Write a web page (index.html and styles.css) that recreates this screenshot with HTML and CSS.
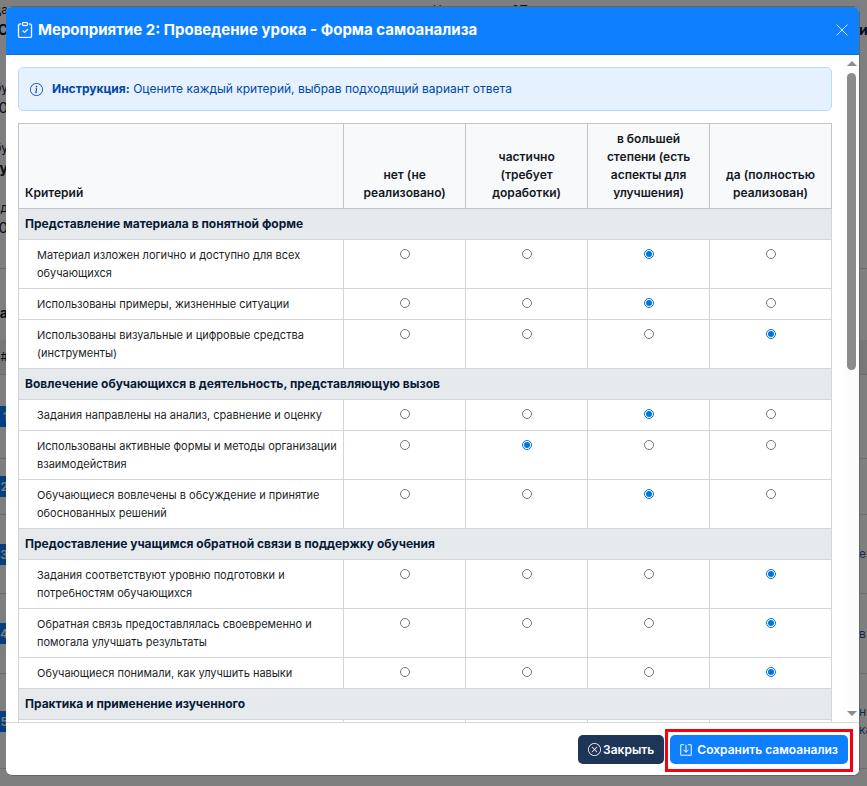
FILE: index.html
```
<!DOCTYPE html>
<html lang="ru">
<head>
  <meta charset="UTF-8">
  <meta name="viewport" content="width=device-width, initial-scale=1.0">
  <title>Мероприятие 2: Проведение урока - Форма самоанализа</title>
  <link rel="stylesheet" href="styles.css">
</head>
<body>

<!-- Page under the modal -->
<div class="page" aria-hidden="true">
  <div class="page-row h-20"><span>да</span><div class="page-mid"><span>Н</span><span>ЗП</span></div><span></span></div>
  <div class="page-row h-20 strong"><span>СС</span><span>и</span></div>
  <div class="page-row h-38"></div>
  <div class="page-row h-20"><span>бу</span></div>
  <div class="page-row h-20 big"><span>0</span></div>
  <div class="page-row h-20"></div>
  <div class="page-row h-20"><span>бу</span></div>
  <div class="page-row h-20 strong"><span>у</span></div>
  <div class="page-row h-20"></div>
  <div class="page-row h-20"><span>зд</span></div>
  <div class="page-row h-20 big"><span>0</span></div>
  <div class="page-row h-31 line"></div>
  <div class="page-row h-71 strong"><span class="low">а</span></div>
  <div class="page-row h-35 line shade"><span>#</span></div>
  <div class="page-row h-84 line"><span class="badge">1</span></div>
  <div class="page-row h-56 line"><span class="badge">2</span></div>
  <div class="page-row h-79 line"><span class="badge">3</span><span class="link">ен</span></div>
  <div class="page-row h-80 line"><span class="badge">4</span><span class="link">в</span></div>
  <div class="page-row h-95 line"><span class="badge">5</span><span class="link">ни<br>ка</span></div>
</div>

<div class="backdrop">
  <div class="modal" role="dialog" aria-labelledby="modalTitle">
    <div class="modal-header">
      <svg class="icon" viewBox="0 0 16 16" fill="currentColor" stroke="currentColor" stroke-width=".3">
        <path fill-rule="evenodd" d="M10.854 7.146a.5.5 0 0 1 0 .708l-3 3a.5.5 0 0 1-.708 0l-1.500-1.500a.5.5 0 1 1 .708-.708L7.500 9.793l2.646-2.647a.5.5 0 0 1 .708 0z"/>
        <path d="M4 1.500H3a2 2 0 0 0-2 2V14a2 2 0 0 0 2 2h10a2 2 0 0 0 2-2V3.500a2 2 0 0 0-2-2h-1v1h1a1 1 0 0 1 1 1V14a1 1 0 0 1-1 1H3a1 1 0 0 1-1-1V3.500a1 1 0 0 1 1-1h1z"/>
        <path d="M9.500 1a.5.5 0 0 1 .5.5v1a.5.5 0 0 1-.5.5h-3a.5.5 0 0 1-.5-.5v-1a.5.5 0 0 1 .5-.5zm-3-1A1.500 1.500 0 0 0 5 1.500v1A1.500 1.500 0 0 0 6.500 4h3A1.500 1.500 0 0 0 11 2.500v-1A1.500 1.500 0 0 0 9.500 0z"/>
      </svg>
      <h1 id="modalTitle">Мероприятие 2: Проведение урока - Форма самоанализа</h1>
      <button type="button" class="close" aria-label="Закрыть">
        <svg viewBox="0 0 12 12" fill="none" stroke="currentColor"><path d="M.5.5l11 11M11.500.5l-11 11"/></svg>
      </button>
    </div>

    <div class="modal-body">
      <div class="content">
        <div class="alert">
          <svg class="icon" viewBox="0 0 16 16" fill="currentColor">
            <path d="M8 15A7 7 0 1 1 8 1a7 7 0 0 1 0 14m0 1A8 8 0 1 0 8 0a8 8 0 0 0 0 16"/>
            <path d="m8.930 6.588-2.290.287-.082.380.450.083c.294.070.352.176.288.469l-.738 3.468c-.194.897.105 1.319.808 1.319.545 0 1.178-.252 1.465-.598l.088-.416c-.2.176-.492.246-.686.246-.275 0-.375-.193-.304-.533zM9 4.500a1 1 0 1 1-2 0 1 1 0 0 1 2 0"/>
          </svg>
          <p><strong>Инструкция:</strong> Оцените каждый критерий, выбрав подходящий вариант ответа</p>
        </div>

        <table class="criteria">
          <thead>
            <tr>
              <th class="name">Критерий</th>
              <th>нет (не реализовано)</th>
              <th>частично (требует доработки)</th>
              <th>в большей степени (есть аспекты для улучшения)</th>
              <th>да (полностью реализован)</th>
            </tr>
          </thead>
          <tbody>
            <tr class="section"><td colspan="5">Представление материала в понятной форме</td></tr>
            <tr>
              <td id="c1">Материал изложен логично и доступно для всех обучающихся</td>
              <td><input type="radio" name="c1" aria-labelledby="c1"></td>
              <td><input type="radio" name="c1" aria-labelledby="c1"></td>
              <td><input type="radio" name="c1" aria-labelledby="c1" checked></td>
              <td><input type="radio" name="c1" aria-labelledby="c1"></td>
            </tr>
            <tr>
              <td id="c2">Использованы примеры, жизненные ситуации</td>
              <td><input type="radio" name="c2" aria-labelledby="c2"></td>
              <td><input type="radio" name="c2" aria-labelledby="c2"></td>
              <td><input type="radio" name="c2" aria-labelledby="c2" checked></td>
              <td><input type="radio" name="c2" aria-labelledby="c2"></td>
            </tr>
            <tr>
              <td id="c3">Использованы визуальные и цифровые средства (инструменты)</td>
              <td><input type="radio" name="c3" aria-labelledby="c3"></td>
              <td><input type="radio" name="c3" aria-labelledby="c3"></td>
              <td><input type="radio" name="c3" aria-labelledby="c3"></td>
              <td><input type="radio" name="c3" aria-labelledby="c3" checked></td>
            </tr>
            <tr class="section"><td colspan="5">Вовлечение обучающихся в деятельность, представляющую вызов</td></tr>
            <tr>
              <td id="c4">Задания направлены на анализ, сравнение и оценку</td>
              <td><input type="radio" name="c4" aria-labelledby="c4"></td>
              <td><input type="radio" name="c4" aria-labelledby="c4"></td>
              <td><input type="radio" name="c4" aria-labelledby="c4" checked></td>
              <td><input type="radio" name="c4" aria-labelledby="c4"></td>
            </tr>
            <tr>
              <td id="c5">Использованы активные формы и методы организации взаимодействия</td>
              <td><input type="radio" name="c5" aria-labelledby="c5"></td>
              <td><input type="radio" name="c5" aria-labelledby="c5" checked></td>
              <td><input type="radio" name="c5" aria-labelledby="c5"></td>
              <td><input type="radio" name="c5" aria-labelledby="c5"></td>
            </tr>
            <tr>
              <td id="c6">Обучающиеся вовлечены в обсуждение и принятие обоснованных решений</td>
              <td><input type="radio" name="c6" aria-labelledby="c6"></td>
              <td><input type="radio" name="c6" aria-labelledby="c6"></td>
              <td><input type="radio" name="c6" aria-labelledby="c6" checked></td>
              <td><input type="radio" name="c6" aria-labelledby="c6"></td>
            </tr>
            <tr class="section"><td colspan="5">Предоставление учащимся обратной связи в поддержку обучения</td></tr>
            <tr>
              <td id="c7">Задания соответствуют уровню подготовки и потребностям обучающихся</td>
              <td><input type="radio" name="c7" aria-labelledby="c7"></td>
              <td><input type="radio" name="c7" aria-labelledby="c7"></td>
              <td><input type="radio" name="c7" aria-labelledby="c7"></td>
              <td><input type="radio" name="c7" aria-labelledby="c7" checked></td>
            </tr>
            <tr>
              <td id="c8">Обратная связь предоставлялась своевременно и помогала улучшать результаты</td>
              <td><input type="radio" name="c8" aria-labelledby="c8"></td>
              <td><input type="radio" name="c8" aria-labelledby="c8"></td>
              <td><input type="radio" name="c8" aria-labelledby="c8"></td>
              <td><input type="radio" name="c8" aria-labelledby="c8" checked></td>
            </tr>
            <tr>
              <td id="c9">Обучающиеся понимали, как улучшить навыки</td>
              <td><input type="radio" name="c9" aria-labelledby="c9"></td>
              <td><input type="radio" name="c9" aria-labelledby="c9"></td>
              <td><input type="radio" name="c9" aria-labelledby="c9"></td>
              <td><input type="radio" name="c9" aria-labelledby="c9" checked></td>
            </tr>
            <tr class="section"><td colspan="5">Практика и применение изученного</td></tr>
            <tr><td></td><td></td><td></td><td></td><td></td></tr>
          </tbody>
        </table>
      </div>

      <div class="scrollbar" aria-hidden="true">
        <div class="arrow up"></div>
        <div class="track"><div class="thumb"></div></div>
        <div class="arrow down"></div>
      </div>
    </div>

    <div class="modal-footer">
      <button type="button" class="btn btn-dark">
        <svg class="icon" viewBox="0 0 16 16" fill="currentColor">
          <path d="M8 15A7 7 0 1 1 8 1a7 7 0 0 1 0 14m0 1A8 8 0 1 0 8 0a8 8 0 0 0 0 16"/>
          <path d="M4.646 4.646a.5.5 0 0 1 .708 0L8 7.293l2.646-2.647a.5.5 0 0 1 .708.708L8.707 8l2.647 2.646a.5.5 0 0 1-.708.708L8 8.707l-2.646 2.647a.5.5 0 0 1-.708-.708L7.293 8 4.646 5.354a.5.5 0 0 1 0-.708"/>
        </svg>
        Закрыть
      </button>
      <div class="highlight">
        <button type="submit" class="btn btn-primary">
          <svg class="icon" viewBox="0 0 16 16" fill="none" stroke="currentColor" stroke-width="1.300">
            <path d="M5.500 1H1v14h14V1h-4.500M8 1v10M4.500 7.500L8 11l3.500-3.500"/>
          </svg>
          Сохранить самоанализ
        </button>
      </div>
    </div>
  </div>
</div>

</body>
</html>
```

FILE: styles.css
```
* {
  box-sizing: border-box;
}

body {
  margin: 0;
  height: 100vh;
  overflow: hidden;
  background-color: #fff;
  color: #0b1a33;
  font-family: Inter, sans-serif;
  font-size: 12px;
  line-height: 18px;
}

h1, p {
  margin: 0;
}

button {
  font-family: inherit;
  border: none;
  cursor: pointer;
}

/* page behind the modal */
.page-row {
  display: flex;
  justify-content: space-between;
  align-items: center;
}

.page-row > span {
  display: flex;
  justify-content: flex-end;
  width: 8px;
}

.page-row > span + span {
  justify-content: flex-start;
}

.page-mid {
  flex: 1;
  display: flex;
  gap: 70px;
  padding-left: 49%;
}

.h-20 { height: 20px; }
.h-31 { height: 31px; }
.h-35 { height: 35px; }
.h-38 { height: 38px; }
.h-56 { height: 56px; }
.h-71 { height: 71px; }
.h-79 { height: 79px; }
.h-80 { height: 80px; }
.h-84 { height: 84px; }
.h-95 { height: 95px; }

.line {
  border-bottom: 1px solid #d5d8dc;
}

.shade {
  background-color: #f0f1f3;
}

.strong {
  font-size: 14px;
  font-weight: 700;
}

.big {
  font-size: 15px;
}

.low {
  padding-top: 16px;
}

.page-row .badge {
  background-color: #0d7fff;
  color: #fff;
  line-height: 21px;
  font-weight: 600;
}

.page-row .link {
  color: #2456a8;
}

/* modal */
.backdrop {
  position: fixed;
  inset: 0;
  padding: 6px 7px 10px 6px;
  background-color: rgba(0, 0, 0, 0.5);
}

.modal {
  display: flex;
  flex-direction: column;
  height: 100%;
  overflow: hidden;
  background-color: #fff;
  border: 1px solid #666;
  border-top-color: #6f6a2e;
  border-left: none;
  border-radius: 6px;
}

.modal-header {
  display: flex;
  align-items: center;
  gap: 5px;
  padding: 11px 11px 13px;
  background-color: #0d7fff;
  border-bottom: 1px solid #0b6edc;
  color: #fff;
}

.modal-header h1 {
  flex: 1;
  font-size: 15px;
  font-weight: 700;
  line-height: 23px;
}

.icon {
  flex: none;
  width: 13px;
  height: 13px;
}

.modal-header .icon {
  width: 16px;
  height: 16px;
}

.close {
  display: flex;
  padding: 0;
  background: none;
  color: #cfe5ff;
}

.close svg {
  width: 12px;
  height: 12px;
}

.modal-body {
  flex: 1;
  display: flex;
  min-height: 0;
}

.content {
  flex: 1;
  padding: 12px;
  overflow: hidden;
}

.alert {
  display: flex;
  align-items: center;
  gap: 9px;
  margin-bottom: 12px;
  padding: 12px 11px;
  border: 1px solid #b6d9ff;
  border-radius: 5px;
  background-color: #e5f1ff;
  color: #0048a5;
}

.criteria {
  width: 100%;
  table-layout: fixed;
  border-collapse: collapse;
}

.criteria th,
.criteria td {
  height: 31px;
  padding: 6px;
  border: 1px solid #d3d5d8;
  text-align: center;
  vertical-align: top;
}

.criteria th {
  width: 15%;
  border-color: #c1c4c8;
  background-color: #f8f9fb;
  color: #14181f;
  font-weight: 600;
  vertical-align: bottom;
}

.criteria .name {
  width: 40%;
  text-align: left;
}

.criteria td:first-child {
  padding-left: 18px;
  color: #1b1f27;
  font-size: 11px;
  text-align: left;
}

.criteria .section td:first-child {
  padding-left: 6px;
  border-top-color: #c1c4c8;
  background-color: #e6eaed;
  color: #0b1a33;
  font-size: 12px;
  font-weight: 700;
}

.criteria input {
  display: block;
  width: 10px;
  height: 10px;
  margin: 3px auto 0;
  accent-color: #0075dd;
}

.scrollbar {
  display: flex;
  flex-direction: column;
  align-items: center;
  width: 15px;
  padding: 6px 0;
  background-color: #fcfcfc;
}

.arrow {
  border: 5px solid transparent;
}

.up {
  border-top: none;
  border-bottom: 5px solid #8b8b8b;
}

.down {
  border-bottom: none;
  border-top: 5px solid #8b8b8b;
}

.track {
  flex: 1;
  padding: 7px 0;
}

.thumb {
  width: 9px;
  height: 47%;
  border-radius: 5px;
  background-color: #8b8b8b;
}

.modal-footer {
  display: flex;
  justify-content: flex-end;
  align-items: baseline;
  gap: 1px;
  padding: 6px 6px 3px;
  border-top: 1px solid #d5d7da;
}

.btn {
  display: flex;
  align-items: center;
  gap: 5px;
  padding: 5px 10px;
  border-radius: 5px;
  color: #fff;
  font-size: 12px;
  font-weight: 600;
  line-height: 19px;
}

.btn-dark {
  gap: 2px;
  background-color: #1d3557;
}

.btn-primary {
  background-color: #0d7fff;
}

.btn-primary .icon {
  width: 12px;
  height: 12px;
}

.highlight {
  padding: 3px 2px 5px;
  border: 3px solid #f5000f;
}
```
